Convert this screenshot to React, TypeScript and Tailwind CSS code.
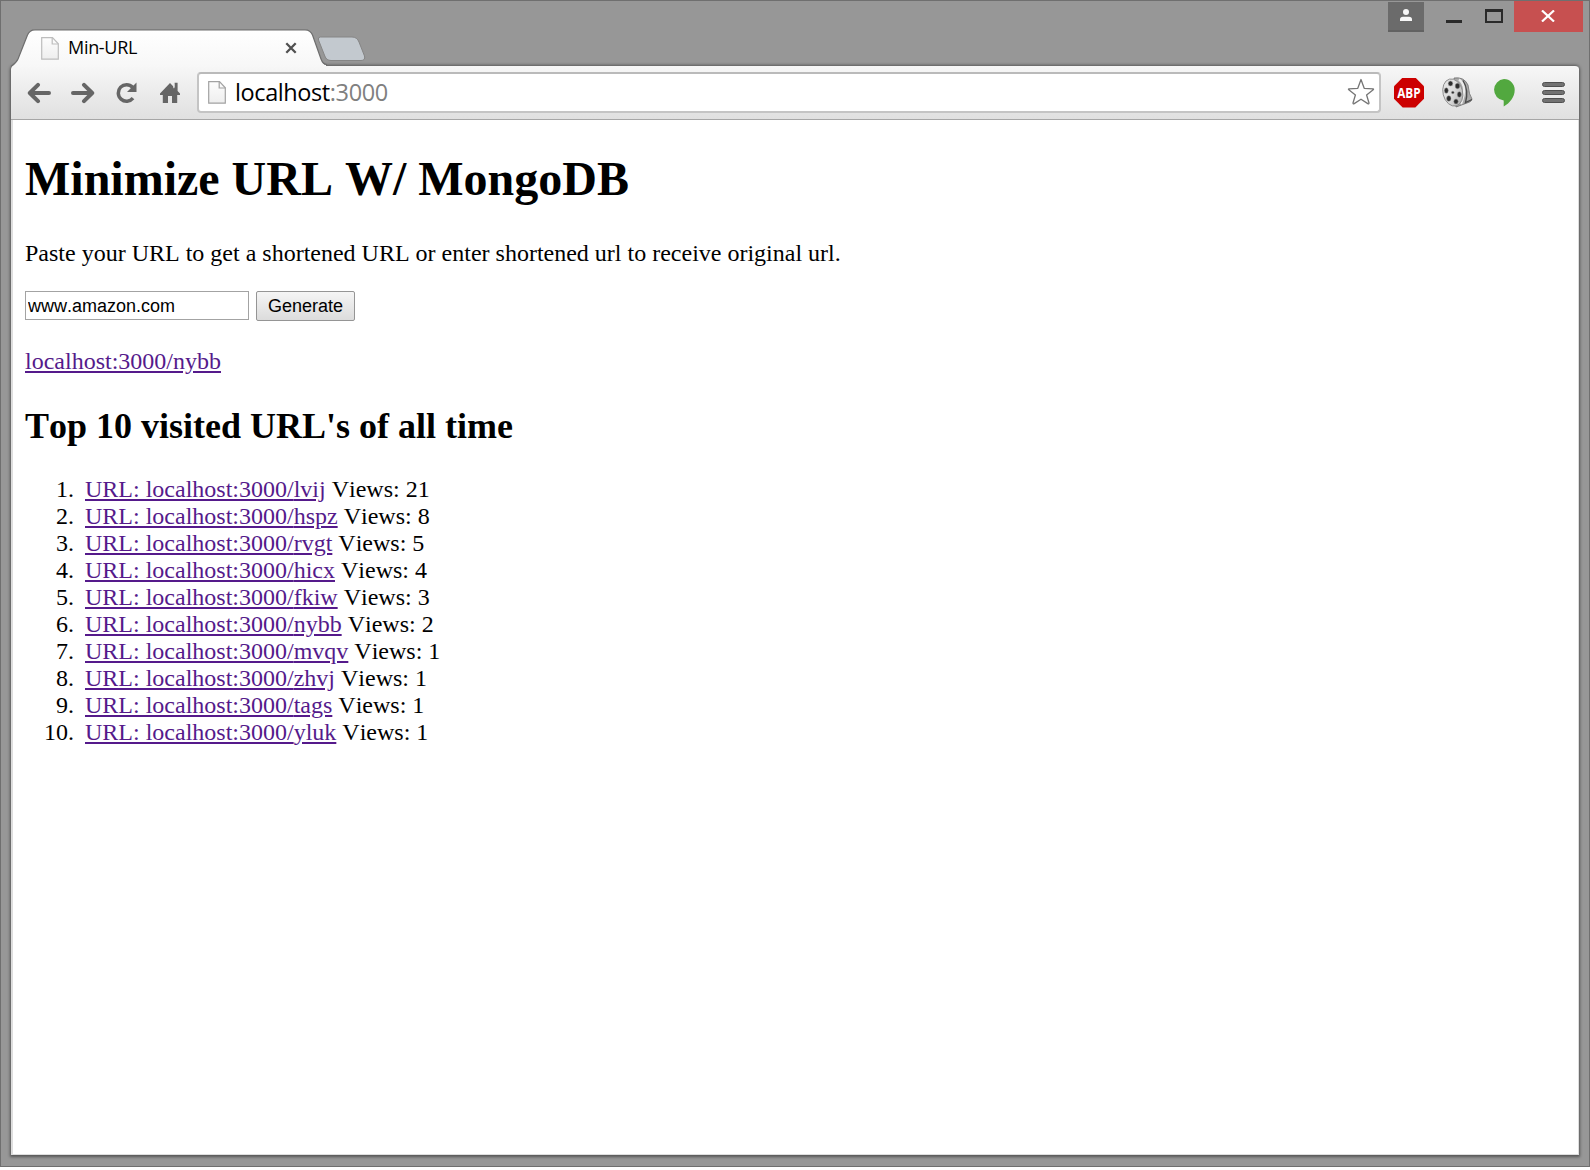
import React from "react";

const visited = [
  { path: "lvij", views: 21 },
  { path: "hspz", views: 8 },
  { path: "rvgt", views: 5 },
  { path: "hicx", views: 4 },
  { path: "fkiw", views: 3 },
  { path: "nybb", views: 2 },
  { path: "mvqv", views: 1 },
  { path: "zhvj", views: 1 },
  { path: "tags", views: 1 },
  { path: "yluk", views: 1 },
];

function PageIcon({ stroke, className }: { stroke: string; className: string }) {
  return (
    <svg width="18" height="23" viewBox="0 0 18 23" fill="none" className={className}>
      <defs>
        <linearGradient id="paper" x1="0" y1="0" x2="0" y2="1">
          <stop offset="0" stopColor="#fdfdfd" />
          <stop offset="1" stopColor="#eeeeee" />
        </linearGradient>
      </defs>
      <path d="M0.7 0.7H11.5L17.3 6.8V22.2H0.7Z" fill="url(#paper)" stroke={stroke} strokeWidth="1.2" />
      <path d="M11.2 0.7V7H17.3" stroke={stroke} strokeWidth="1.2" />
    </svg>
  );
}

function TitleBar() {
  return (
    <header className="flex h-[64px] shrink-0 items-start">
      <div className="relative z-10 ml-[9px] mt-[28px] flex h-[37px] w-[316px] shrink-0 items-start">
        <svg width="318" height="39" viewBox="0 0 318 39" fill="none" className="absolute left-0 top-0">
          <defs>
            <linearGradient id="tab" x1="0" y1="0" x2="0" y2="1">
              <stop offset="0" stopColor="#ffffff" />
              <stop offset="1" stopColor="#f7f7f7" />
            </linearGradient>
          </defs>
          <path
            d="M2 37.500C5 34.500 6.500 33.500 8 30L17.500 6Q19.500 0.800 25 0.800H295Q300.500 0.800 302.500 6L311 30Q313 36 316 36V38H2Z"
            fill="url(#tab)"
          />
          <path
            d="M1 37.500C5 34.500 6.500 33.500 8 30L17.500 6Q19.500 0.800 25 0.800H295Q300.500 0.800 302.500 6L311 30Q313 35.500 317 35.500"
            stroke="#6e6e6e"
            strokeWidth="1.200"
          />
        </svg>
        <PageIcon stroke="#bdbdbd" className="relative ml-[31px] mt-[8px]" />
        <span className="relative ml-[9px] mt-[6px] text-[18px] leading-[24px] tracking-[-0.3px] text-black">Min-URL</span>
        <svg width="12" height="12" viewBox="0 0 12 12" className="absolute left-[275px] top-[13px]">
          <path d="M1.300 1.300L10.700 10.700M10.700 1.300L1.300 10.700" stroke="#505050" strokeWidth="2.300" />
        </svg>
      </div>
      <svg width="50" height="26" viewBox="0 0 50 26" className="-ml-[10px] mt-[35px] shrink-0">
        <path
          d="M4.500 1H36Q41 1 43 6L48.500 20Q49.500 24.500 45 24.500H15Q10.500 24.500 8.800 20L2.500 4Q1.500 1 4.500 1Z"
          fill="#c3c9cf"
          stroke="#858585"
          strokeWidth="1"
        />
      </svg>
      <div className="ml-auto mr-[6px] flex h-[31px] items-start">
        <button className="mt-[1px] flex h-[30px] w-[36px] items-start justify-center border-b-2 border-[#626262] bg-[#6b6b6b] pt-[7px]">
          <svg width="12" height="12" viewBox="0 0 12 12" fill="#f7f7f7">
            <circle cx="6" cy="3" r="3" />
            <path d="M0 12V10.500Q0 7.800 3 7.800H9Q12 7.800 12 10.500V12Z" />
          </svg>
        </button>
        <button className="ml-[22px] mt-[19px] h-[3px] w-4 bg-[#2a2a2a]" />
        <button className="ml-[23px] mt-[8px] h-[14px] w-[18px] border-2 border-t-[3px] border-[#2a2a2a]" />
        <button className="ml-[11px] flex h-[31px] w-[69px] items-center justify-center bg-[#c75050] pr-[1px]">
          <svg width="14" height="12" viewBox="0 0 14 12" className="-mt-[1px]">
            <path d="M1 0.500L13 11.500M13 0.500L1 11.500" stroke="#ffffff" strokeWidth="2.200" />
          </svg>
        </button>
      </div>
    </header>
  );
}

function Toolbar() {
  return (
    <nav className="flex h-[55px] shrink-0 items-center rounded-t-[4px] border-b border-t border-b-[#a6a6a6] border-t-[#6e6e6e] bg-linear-to-b from-[#f7f7f7] to-[#e0e0e0]">
      <svg width="24" height="22" viewBox="0 0 24 22" fill="none" className="ml-[16px]">
        <path d="M11 2.800L2.800 11L11 19.200M3.500 11H22" stroke="#666666" strokeWidth="4" strokeLinecap="round" strokeLinejoin="round" />
      </svg>
      <svg width="24" height="22" viewBox="0 0 24 22" fill="none" className="ml-[20px]">
        <path d="M13 2.800L21.200 11L13 19.200M20.500 11H2" stroke="#666666" strokeWidth="4" strokeLinecap="round" strokeLinejoin="round" />
      </svg>
      <svg width="22" height="22" viewBox="0 0 22 22" fill="none" className="ml-[20px]">
        <path d="M17.600 5.200A8.300 8.300 0 1 0 18 16.200" stroke="#666666" strokeWidth="3.500" />
        <path d="M21.500 0.500V10H12Z" fill="#666666" />
      </svg>
      <svg width="20" height="22" viewBox="0 0 20 22" className="ml-[23px]">
        <path d="M10 1L0 11.500V13H2.800V21H8V14H12V21H17.200V13H20V11.500L17.600 9V0.800H14.600V5.800Z" fill="#666666" />
        <path d="M13.800 1.500V6.200" stroke="#e8e8e8" strokeWidth="1" />
      </svg>
      <div className="ml-[17px] flex h-[41px] w-[1184px] items-center rounded-[4px] border-2 border-[#c4c4c4] border-t-[#bababa] bg-white">
        <PageIcon stroke="#a2a2a2" className="ml-[9px]" />
        <span className="-mt-[1px] ml-[9px] text-[23.5px] leading-[34px] tracking-[-0.4px] text-black">
          localhost<span className="text-[#808080]">:3000</span>
        </span>
        <svg width="28" height="28" viewBox="0 0 28 28" fill="none" className="ml-auto mr-[4px] -mt-[2px]">
          <path
            d="M14 1.500L17.200 10.300L26 10.800Q27 11 26.200 11.800L19.600 17L22 25Q22 26.300 20.800 25.600L14 21.200L7.200 25.600Q6 26.300 6 25L8.400 17L1.800 11.800Q1 11 2 10.800L10.800 10.300Z"
            stroke="#757575"
            strokeWidth="1.300"
            strokeLinejoin="round"
          />
        </svg>
      </div>
      <div className="ml-[13px] flex size-[30px] items-center justify-center bg-[#cc0000] [clip-path:polygon(29%_0,71%_0,100%_29%,100%_71%,71%_100%,29%_100%,0_71%,0_29%)]">
        <span className="inline-block scale-x-[0.84] text-[14px] font-bold leading-none text-white">ABP</span>
      </div>
      <svg width="31" height="31" viewBox="0 0 31 31" className="ml-[18px]">
        <defs>
          <linearGradient id="reel" x1="0" y1="0" x2="1" y2="1">
            <stop offset="0" stopColor="#e8e8e8" />
            <stop offset="0.5" stopColor="#dcdcdc" />
            <stop offset="1" stopColor="#a5a5a5" />
          </linearGradient>
        </defs>
        <path d="M12 1Q22 -0.500 26 8Q27 18 30 22Q29.500 25 25 26L14 30Z" fill="#a9a9a9" stroke="#6b6b6b" strokeWidth="0.800" />
        <path d="M17 2.500Q26 9 19 27" fill="none" stroke="#ececec" strokeWidth="2.200" />
        <path d="M21 3.500Q27 13 23.500 25.500L30 22.500" fill="none" stroke="#4a4a4a" strokeWidth="1.300" />
        <ellipse cx="10.800" cy="15.500" rx="9.800" ry="13.800" transform="rotate(-14 10.800 15.500)" fill="url(#reel)" stroke="#8c8c8c" strokeWidth="0.900" />
        <g fill="#2d2d2d" stroke="#9a9a9a" strokeWidth="0.500">
          <ellipse cx="8.500" cy="6.500" rx="2.300" ry="2.500" />
          <ellipse cx="15.500" cy="9" rx="2.300" ry="2.800" />
          <ellipse cx="4.300" cy="13.500" rx="2" ry="2.700" />
          <ellipse cx="6.800" cy="21.500" rx="2.200" ry="2.800" />
          <ellipse cx="14" cy="24.500" rx="2.200" ry="2.600" />
          <ellipse cx="17.300" cy="17.500" rx="2" ry="2.800" />
          <circle cx="10.800" cy="15.500" r="1.300" />
        </g>
      </svg>
      <svg width="22" height="28" viewBox="0 0 22 28" className="ml-[20px]">
        <path d="M11 0A10.800 10.800 0 0 1 21.700 10.800C21.700 18 17 24 10.700 27.500V21.500A10.800 10.800 0 0 1 11 0Z" fill="#52a83f" />
      </svg>
      <div className="ml-[27px] flex flex-col gap-[3px]">
        <i className="h-[5px] w-[23px] rounded-full border border-[#505050] bg-[#727272]" />
        <i className="h-[5px] w-[23px] rounded-full border border-[#505050] bg-[#727272]" />
        <i className="h-[5px] w-[23px] rounded-full border border-[#505050] bg-[#727272]" />
      </div>
    </nav>
  );
}

export default function App() {
  return (
    <div className="flex h-[1167px] w-[1590px] flex-col overflow-hidden border border-[#6f6f6f] bg-[#979797] font-['Open_Sans',sans-serif]">
      <TitleBar />
      <div className="mx-[10px] mb-[11px] flex min-h-0 flex-1 flex-col rounded-t-[4px] shadow-[0_1px_3px_1px_#555555]">
        <Toolbar />
        <main className="flex-1 border-b border-l-2 border-r border-[#dedede] bg-white px-[12px] font-['Liberation_Serif',serif] text-[24px] leading-[27px] text-black [font-kerning:none]">
          <h1 className="mt-[31px] text-[48px] font-bold leading-[55px]">Minimize URL W/ MongoDB</h1>
          <p className="mt-[34px]">Paste your URL to get a shortened URL or enter shortened url to receive original url.</p>
          <form className="mt-[24px] flex items-start">
            <input
              className="h-[29px] w-[224px] border border-[#a3a3a3] bg-white px-[2px] pt-[2px] font-['Liberation_Sans',sans-serif] text-[18px] leading-[20px] outline-none"
              defaultValue="www.amazon.com"
            />
            <button
              type="button"
              className="ml-[7px] h-[30px] w-[99px] rounded-[2px] border border-[#959595] bg-linear-to-b from-[#f5f5f5] to-[#dcdcdc] font-['Liberation_Sans',sans-serif] text-[18px] leading-[20px]"
            >
              Generate
            </button>
          </form>
          <p className="mt-[27px]">
            <a className="text-[#551a8b] underline">localhost:3000/nybb</a>
          </p>
          <h2 className="mt-[31px] text-[36px] font-bold leading-[41px]">Top 10 visited URL&apos;s of all time</h2>
          <ol className="mt-[29px]">
            {visited.map((item, index) => (
              <li key={item.path} className="flex">
                <span className="w-[60px] shrink-0 pr-[11px] text-right">{index + 1}.</span>
                <span>
                  <a className="text-[#551a8b] underline">URL: localhost:3000/{item.path}</a> Views: {item.views}
                </span>
              </li>
            ))}
          </ol>
        </main>
      </div>
    </div>
  );
}
